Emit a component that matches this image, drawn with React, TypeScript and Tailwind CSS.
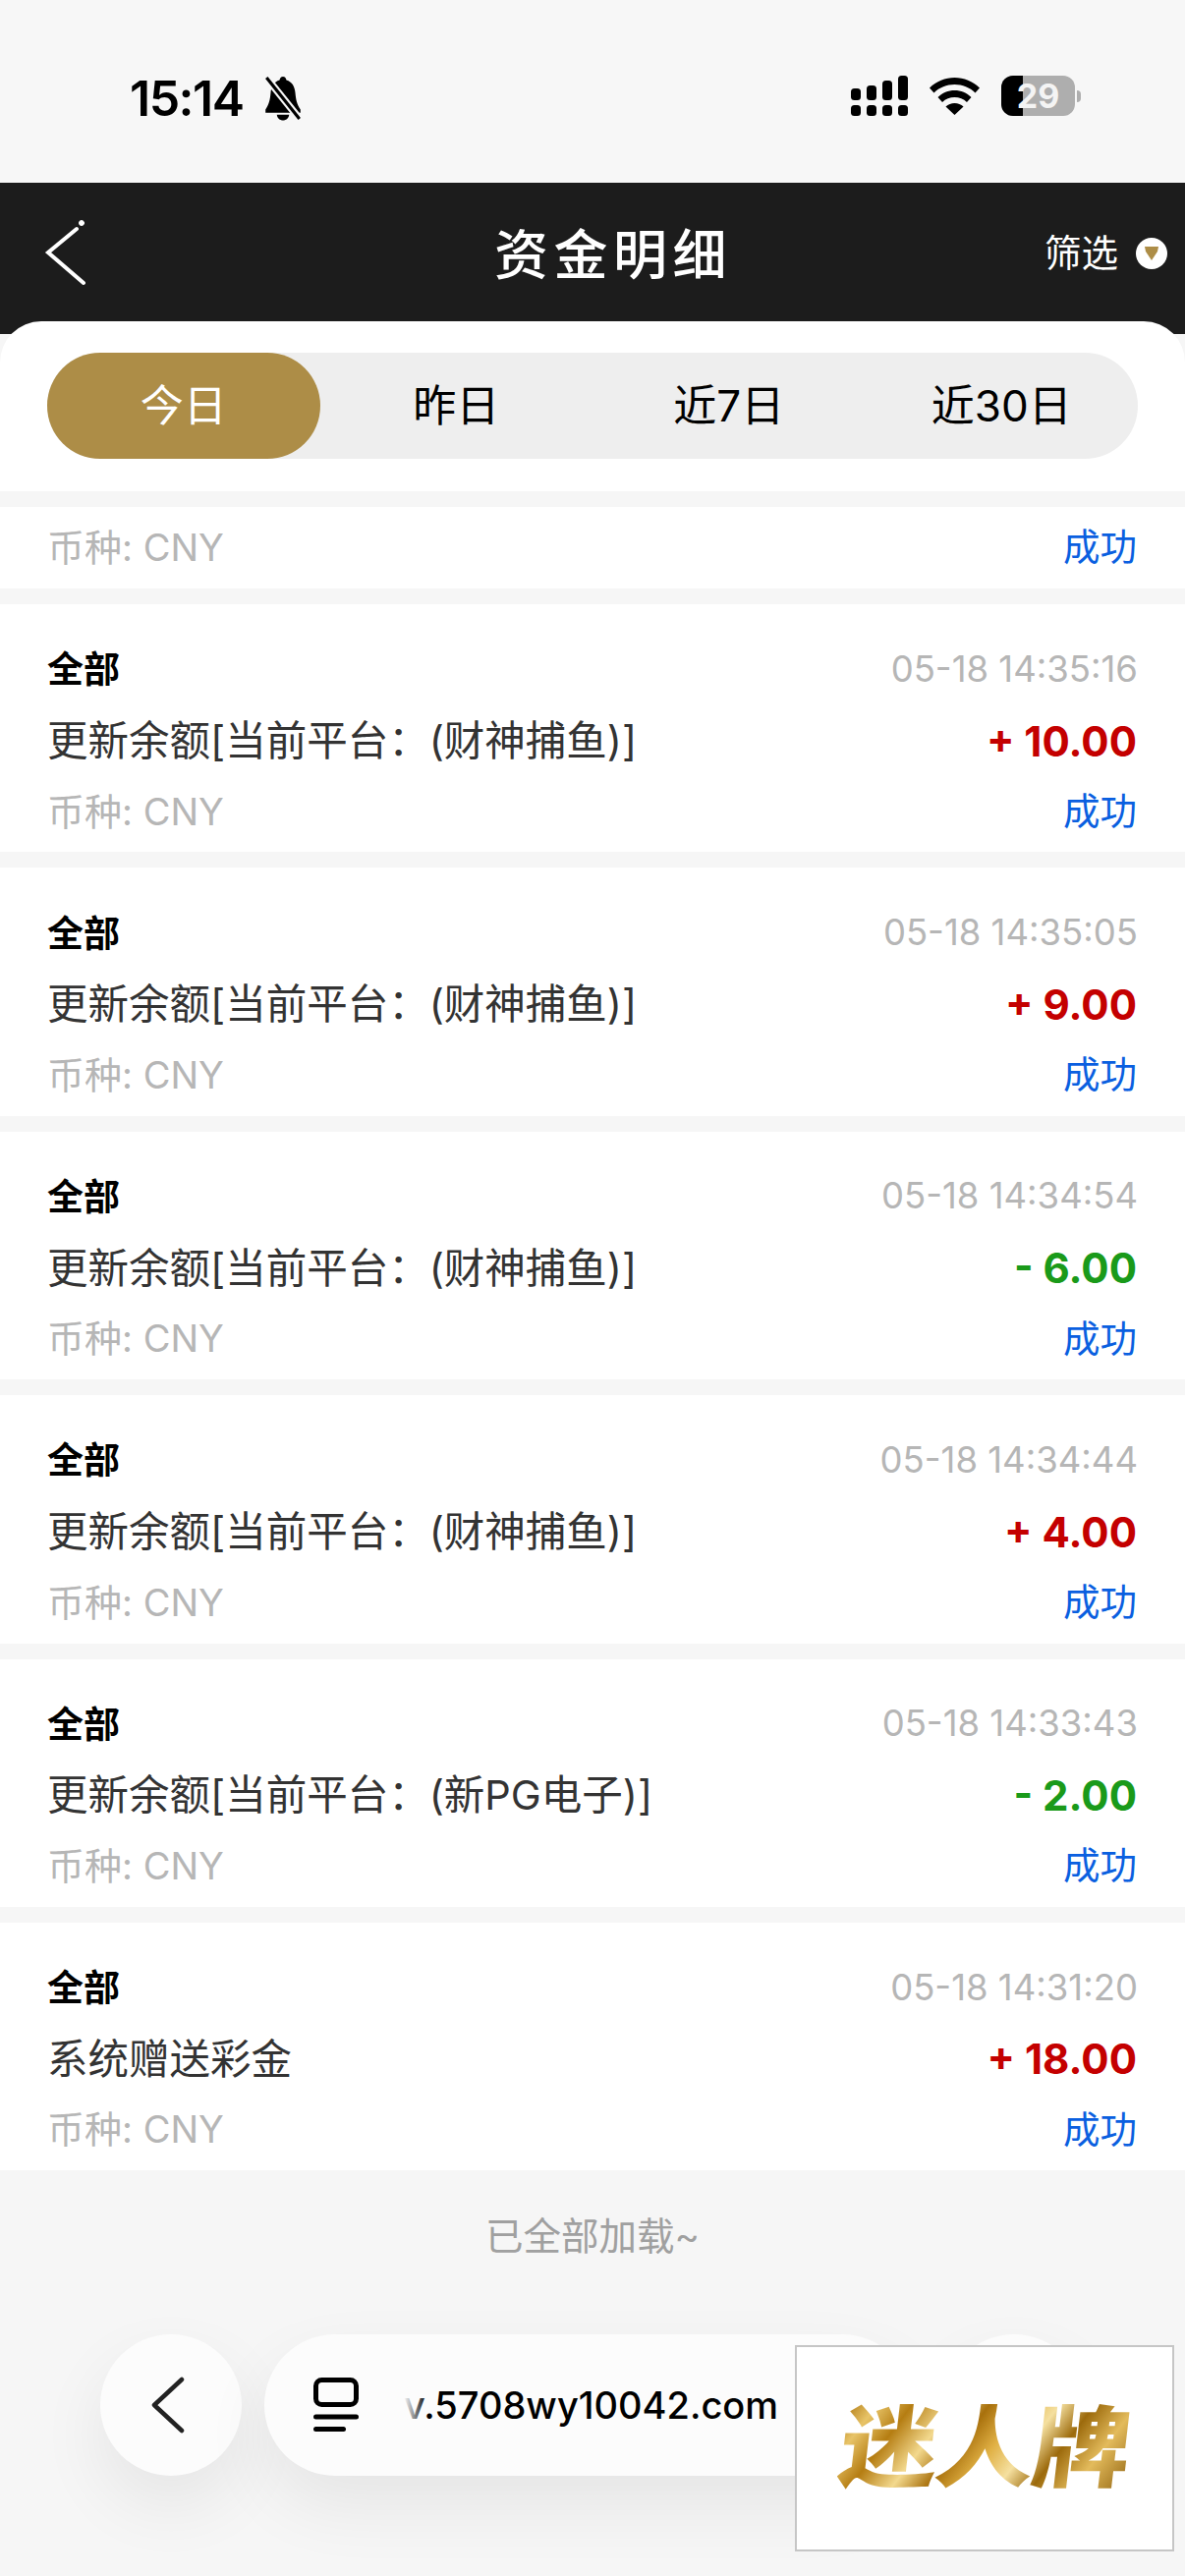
import React from 'react';

type Record = {
  time: string;
  title: string;
  amount: string;
  income: boolean;
};

const records: Record[] = [
  { time: '05-18 14:35:16', title: '更新余额[当前平台：(财神捕鱼)]', amount: '+ 10.00', income: true },
  { time: '05-18 14:35:05', title: '更新余额[当前平台：(财神捕鱼)]', amount: '+ 9.00', income: true },
  { time: '05-18 14:34:54', title: '更新余额[当前平台：(财神捕鱼)]', amount: '- 6.00', income: false },
  { time: '05-18 14:34:44', title: '更新余额[当前平台：(财神捕鱼)]', amount: '+ 4.00', income: true },
  { time: '05-18 14:33:43', title: '更新余额[当前平台：(新PG电子)]', amount: '- 2.00', income: false },
  { time: '05-18 14:31:20', title: '系统赠送彩金', amount: '+ 18.00', income: true },
];

const tabs = ['今日', '昨日', '近7日', '近30日'];

function StatusBar() {
  return (
    <div className="flex h-[186px] items-start justify-between bg-[#f7f7f7] pl-[132px] pr-[106px] pt-[77px]">
      <div className="flex items-center gap-[19px]">
        <span className="text-[50px] leading-[42px] font-semibold tracking-[-1.5px] text-black">15:14</span>
        <svg width="44" height="46" viewBox="0 0 42 44" fill="#000">
          <path d="M21 1c2 0 3 1.500 3.300 3.400C30 6 32.500 11 33 17c.5 6 1.500 11 5 16v3H4v-3c3.500-5 4.500-10 5-16 .5-6 3-11 8.700-12.600C18 2.500 19 1 21 1z" />
          <path d="M15 38h12c-.5 3.500-3 5.500-6 5.500s-5.500-2-6-5.500z" />
          <path d="M5 2l32 40" stroke="#f7f7f7" strokeWidth="7" />
          <path d="M5 2l32 40" stroke="#000" strokeWidth="3" />
        </svg>
      </div>
      <div className="flex items-center gap-[22px]">
        <svg width="58" height="41" viewBox="0 0 58 41" fill="#000">
          <rect x="0" y="13" width="10" height="12" rx="3.500" />
          <rect x="16" y="10" width="10" height="15" rx="3.500" />
          <rect x="32" y="5" width="10" height="20" rx="3.500" />
          <rect x="48" y="0" width="10" height="25" rx="3.500" />
          <rect x="0" y="30" width="10" height="11" rx="3.500" />
          <rect x="16" y="30" width="10" height="11" rx="3.500" />
          <rect x="32" y="30" width="10" height="11" rx="3.500" />
          <rect x="48" y="30" width="10" height="11" rx="3.500" />
        </svg>
        <svg width="51" height="38" viewBox="0 0 51 38" fill="#000">
          <path d="M25.500 0C35 0 44 3.800 51 10.500l-4.500 5C41 10 33.500 7 25.500 7S10 10 4.500 15.500L0 10.500C7 3.800 16 0 25.500 0z" />
          <path d="M25.500 13c6.500 0 12.500 2.500 17 7l-4.500 5c-3.300-3.200-7.800-5-12.500-5s-9.200 1.800-12.500 5l-4.500-5c4.500-4.500 10.500-7 17-7z" />
          <path d="M25.500 26c3.500 0 6.500 1.200 9 3.500l-9 8.500-9-8.500c2.500-2.300 5.500-3.500 9-3.500z" />
        </svg>
        <div className="flex items-center">
          <div className="relative flex h-[41px] w-[75px] items-center justify-center overflow-hidden rounded-[12px] bg-[#aeaeae]">
            <div className="absolute inset-y-0 left-0 w-[22px] bg-black" />
            <span className="relative text-[34px] leading-none font-bold text-[#f4f4f4]">29</span>
          </div>
          <div className="ml-[2px] h-[12px] w-[4px] rounded-r-full bg-[#aeaeae]" />
        </div>
      </div>
    </div>
  );
}

function Header() {
  return (
    <div className="relative flex h-[154px] items-start justify-center bg-[#1c1c1c] pt-[42px]">
      <svg className="absolute left-[45px] top-[33px]" width="46" height="76" viewBox="0 0 46 76" fill="none" stroke="#fff" strokeWidth="4" strokeLinecap="round">
        <path d="M33 14L4 38l36 31" />
        <circle cx="38" cy="8" r="2.500" fill="#fff" strokeWidth="1" />
      </svg>
      <h1 className="ml-[42px] text-[55px] leading-[62px] font-medium tracking-[5.5px] text-white">资金明细</h1>
      <div className="absolute right-[18px] top-[50px] flex items-center gap-[18px]">
        <span className="text-[37.5px] leading-[44px] text-white">筛选</span>
        <div className="flex h-[32px] w-[32px] items-center justify-center rounded-full bg-white">
          <svg width="16" height="14" viewBox="0 0 16 14" fill="#ad8d47">
            <path d="M1 0h14l-1 5-6 9-6-9z" />
          </svg>
        </div>
      </div>
    </div>
  );
}

function Tabs() {
  return (
    <div className="relative z-10 -mt-[13px] h-[173px] rounded-t-[42px] bg-white px-[48px] pt-[32px]">
      <div className="flex h-[108px] w-[1110px] rounded-full bg-[#eeeeee]">
        {tabs.map((t, i) => (
          <div
            key={t}
            className={
              i === 0
                ? 'flex flex-1 items-center justify-center rounded-full bg-[#ad8d47] text-[44px] text-white'
                : 'flex flex-1 items-center justify-center text-[44px] text-black'
            }
          >
            {t}
          </div>
        ))}
      </div>
    </div>
  );
}

function CurrencyRow({ className }: { className: string }) {
  return (
    <div className={className}>
      <span className="text-[38px] text-[#b6b6b6]">币种: CNY</span>
      <span className="mr-[1px] text-[37.5px] text-[#0a5fe0]">成功</span>
    </div>
  );
}

function RecordCard({ item }: { item: Record }) {
  return (
    <div className="h-[252.4px] bg-white px-[48px] pt-[31px]">
      <div className="flex h-[72px] items-center justify-between">
        <span className="text-[37px] font-bold text-black">全部</span>
        <span className="-mt-[2px] text-[36.5px] text-[#b6b6b6]">{item.time}</span>
      </div>
      <div className="flex h-[72px] items-center justify-between">
        <span className="text-[41.5px] text-[#333333]">{item.title}</span>
        <span className={item.income ? 'mr-[1px] text-[42px] font-bold text-[#c40000]' : 'mr-[1px] text-[42px] font-bold text-[#1a9a1a]'}>
          {item.amount}
        </span>
      </div>
      <CurrencyRow className="flex h-[72px] items-center justify-between" />
    </div>
  );
}

function BrowserBar() {
  return (
    <div className="absolute left-[102px] top-[2376px] flex items-center gap-[23px]">
      <div className="flex h-[144px] w-[144px] items-center justify-center rounded-full bg-[#fcfcfc] shadow-[0_30px_70px_rgba(0,0,0,0.07)]">
        <svg className="-ml-[6px]" width="36" height="58" viewBox="0 0 36 58" fill="none" stroke="#222" strokeWidth="4.500" strokeLinecap="round" strokeLinejoin="round">
          <path d="M32 3L4 29l28 26" />
        </svg>
      </div>
      <div className="flex h-[144px] w-[660px] items-center rounded-full bg-[#fcfcfc] pl-[50px] shadow-[0_30px_70px_rgba(0,0,0,0.07)]">
        <svg width="46" height="56" viewBox="0 0 46 56" fill="none" stroke="#000" strokeLinecap="round">
          <rect x="2.500" y="2.500" width="41" height="25" rx="6" strokeWidth="5" />
          <path d="M2.500 40h41" strokeWidth="5" />
          <path d="M2.500 52.500h28" strokeWidth="5" />
        </svg>
        <div className="relative ml-[46px]">
          <span className="text-[38px] leading-none font-medium text-black">v.5708wy10042.com</span>
          <div className="absolute inset-y-0 left-0 w-[24px] bg-gradient-to-r from-[#fcfcfc] to-transparent" />
        </div>
      </div>
      <div className="ml-[8px] h-[144px] w-[144px] rounded-full bg-[#fcfcfc] shadow-[0_30px_70px_rgba(0,0,0,0.07)]" />
    </div>
  );
}

function FloatAd() {
  return (
    <div className="absolute left-[809px] top-[2387px] flex h-[210px] w-[386px] items-center justify-center border-2 border-[#c6c6c6] bg-white">
      <span className="-skew-x-6 scale-y-90 bg-[linear-gradient(120deg,#a86f08_0%,#e8c468_10%,#b57d12_20%,#f3d98e_32%,#a8700c_42%,#e0b044_52%,#f5e0a0_62%,#9c6a0c_72%,#e3bb5c_84%,#8f6210_100%)] bg-clip-text text-[100px] leading-[110px] font-black tracking-[-2px] text-transparent">
        迷人牌
      </span>
    </div>
  );
}

export default function App() {
  return (
    <div className="relative h-[2622px] w-[1206px] overflow-hidden bg-[#f6f6f6] font-['Inter','Noto_Sans_CJK_SC',sans-serif]">
      <StatusBar />
      <Header />
      <Tabs />

      {/* list, first card is scrolled under the tabs */}
      <div className="mt-[16px] flex flex-col gap-[16px]">
        <CurrencyRow className="flex h-[83px] items-center justify-between bg-white px-[48px]" />
        {records.map((r) => (
          <RecordCard key={r.time} item={r} />
        ))}
      </div>

      <p className="mt-[42px] text-center text-[38.5px] leading-[50px] text-[#a0a0a0]">已全部加载~</p>

      <BrowserBar />
      <FloatAd />
    </div>
  );
}
